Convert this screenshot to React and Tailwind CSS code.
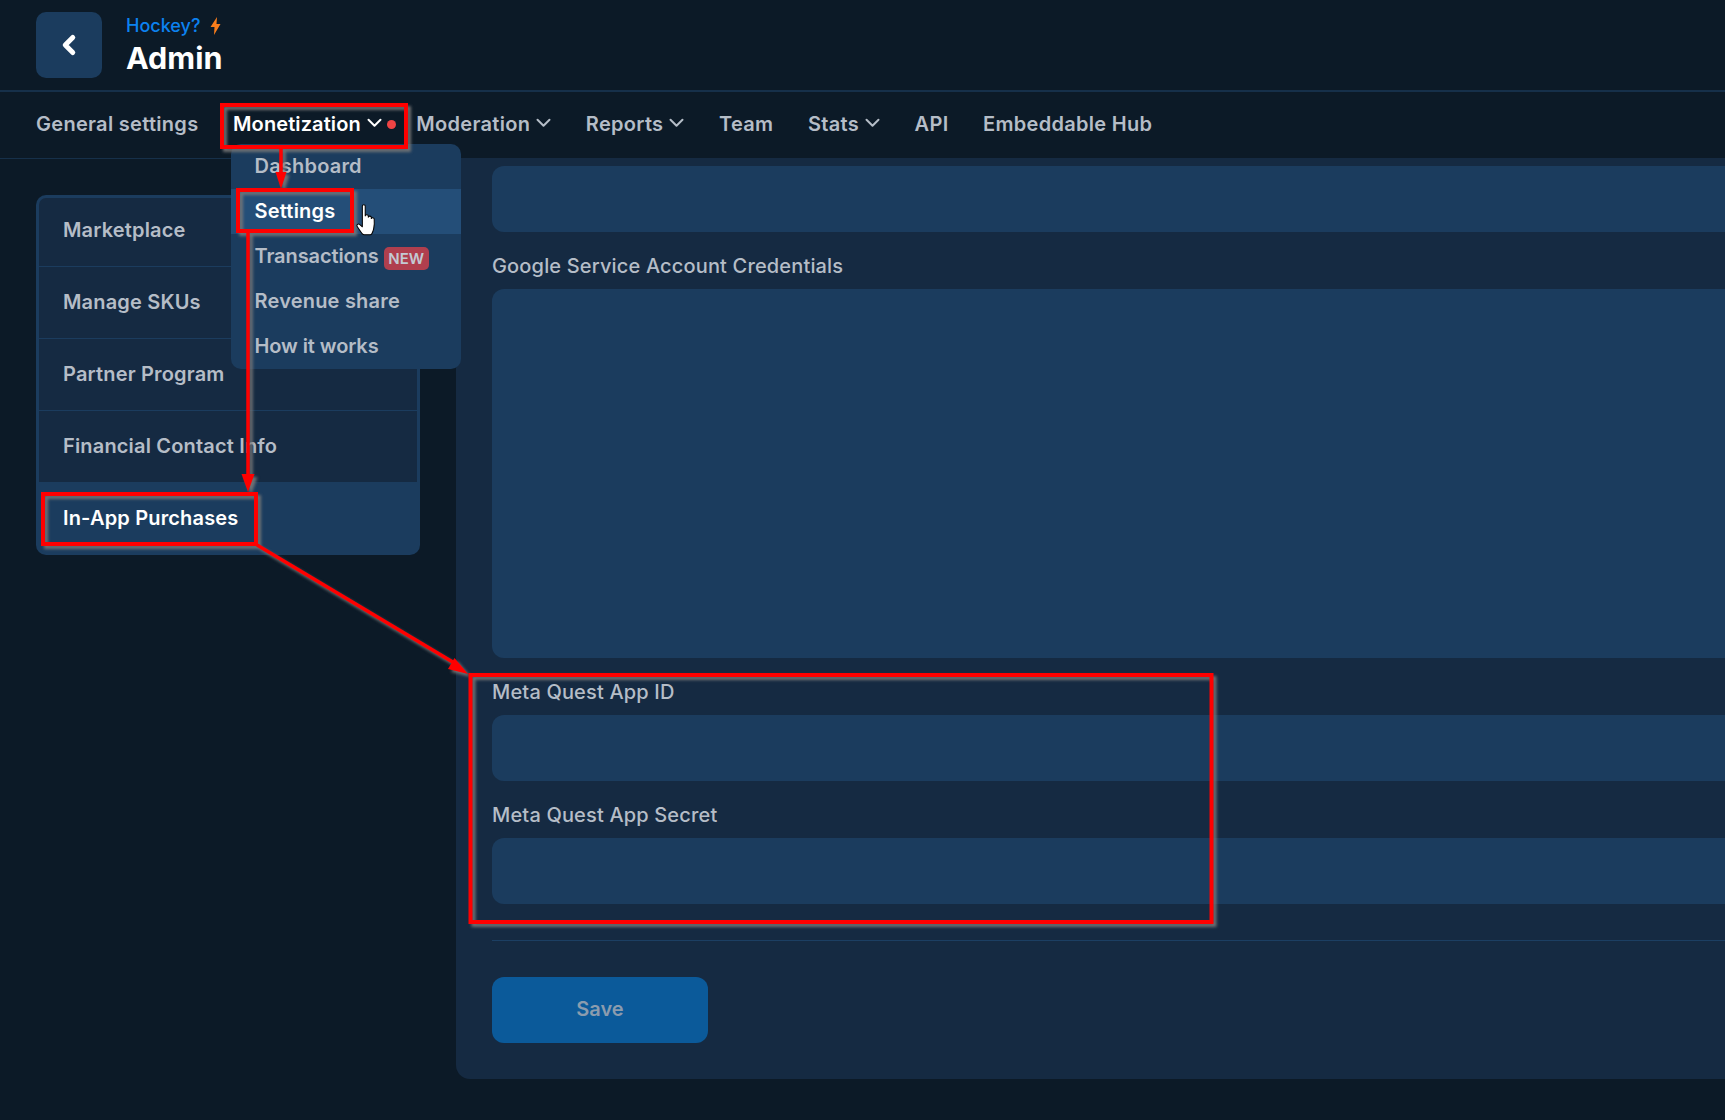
import React from "react";
import { ChevronLeft } from "lucide-react";

function NavItem({ label, chevron, active, dot }) {
  return (
    <div className={`relative flex items-center gap-[6px] text-[20px] font-semibold leading-6 ${active ? "tracking-[0.1px] text-white" : "tracking-[0.3px] text-[#b5bdc7]"}`}>
      <span>{label}</span>
      {chevron && (
        <svg className="mt-[-3px]" width="15" height="10" viewBox="0 0 15 10" fill="none" stroke="currentColor" strokeWidth="2" strokeLinecap="round" strokeLinejoin="round">
          <path d="M1.5 1.8 7.5 7.8 13.5 1.8" />
        </svg>
      )}
      {dot && <span className="absolute left-[calc(100%+5px)] top-[8px] h-[9px] w-[9px] rounded-full bg-[#ef4444]" />}
    </div>
  );
}

function SideRow({ label, first, active }) {
  return (
    <div
      className={`flex items-center pl-6 text-[20px] font-semibold leading-6 tracking-[0.17px] ${
        first ? "h-[69px] pb-[5px] border-b border-[#1b3c5e] bg-[#152a42] text-[#b5bdc7] rounded-t-[7px]"
        : active ? "h-[72px] pb-[2px] text-white"
        : "h-[72px] pb-[2px] border-b border-[#1b3c5e] bg-[#152a42] text-[#b5bdc7]"
      }`}
    >
      {label}
    </div>
  );
}

function Field({ label, tall }) {
  return (
    <>
      <div className="h-[57px] pt-[22px] text-[20px] font-medium leading-6 tracking-[0.16px] text-[#b5bdc7]">{label}</div>
      <div className={`${tall ? "h-[369px]" : "h-[66px]"} rounded-l-[12px] bg-[#1b3c5e]`} />
    </>
  );
}

function MenuItem({ label, active, badge, tight }) {
  return (
    <div className={`flex h-[45px] items-center pl-[23.5px] text-[20px] font-semibold leading-6 ${tight ? "tracking-[-0.1px]" : "tracking-[0.2px]"} ${active ? "bg-[#244e78] text-white" : "text-[#b5bdc7]"}`}>
      <span className="mt-[-2px]">{label}</span>
      {badge && (
        <span className="ml-[5px] mt-[3px] flex h-[23px] w-[45px] items-center justify-center rounded-[5px] bg-[#b03f4e] text-[15px] font-semibold leading-none tracking-normal text-[#c3cad3]">
          NEW
        </span>
      )}
    </div>
  );
}

function Annotations() {
  return (
    <svg className="pointer-events-none absolute left-0 top-0 drop-shadow-[3px_3px_1.5px_rgba(120,120,120,0.9)]" width="1725" height="1120" viewBox="0 0 1725 1120" fill="none">
      <g stroke="#ff0000" strokeWidth="4">
        <rect x="222" y="105" width="184" height="42" />
        <rect x="238" y="190" width="114" height="41" />
        <rect x="43" y="494" width="213" height="50" />
        <rect x="470.5" y="675" width="741" height="247" />
      </g>
      <g stroke="#ff0000" strokeWidth="3.5">
        <line x1="281" y1="147" x2="281" y2="175" />
        <line x1="248" y1="231" x2="248" y2="478" />
        <line x1="257" y1="545" x2="456" y2="664" />
      </g>
      <g fill="#ff0000">
        <polygon points="275.5,172 286.5,172 281,189" />
        <polygon points="241.5,474 254.5,474 248,492" />
        <polygon points="468,674 448,669 454.5,658" />
      </g>
    </svg>
  );
}

function HandCursor() {
  return (
    <svg className="absolute left-[355px] top-[204px]" width="25" height="33" viewBox="0 0 23 32" fill="#fff" stroke="#000" strokeWidth="1" strokeLinejoin="round">
      <path d="M6.5 2c0-1.6 2.8-1.6 2.8 0v9.5c.2-1.6 3-1.5 3 .3v1c.2-1.5 2.9-1.4 2.9.3v1c.3-1.3 2.8-1 2.8.7.3 3.5.2 6.5-.6 9.5-.5 2-1 3.2-1.7 4.6-.3.7-.9 1-1.6 1H8.5c-.9 0-1.6-.4-2.2-1.1-1.6-2.2-3.2-4.4-4.8-6.9-1-1.6.9-3.2 2.3-2.2l2.7 2.4z" />
    </svg>
  );
}

export default function App() {
  return (
    <div className="relative h-[1120px] w-[1725px] overflow-hidden bg-[#0c1a27] font-['Inter',sans-serif]">
      <header className="flex h-[92px] items-start gap-[24px] border-b-2 border-[#16304a] pl-9 pt-3">
        <div className="flex h-[66px] w-[66px] items-center justify-center rounded-[10px] bg-[#1b3c5e] text-white">
          <ChevronLeft size={30} strokeWidth={4} />
        </div>
        <div className="flex flex-col pt-[2px]">
          <div className="flex items-center gap-[10px] text-[18px] font-medium leading-6 text-[#0c82f0]">
            <span>Hockey?</span>
            <svg width="11" height="18" viewBox="0 0 11 18" fill="#f97d1c"><path d="M7 0 .5 10H4.5L4 18l6.5-11H6.5z" /></svg>
          </div>
          <div className="mt-[2px] text-[30.5px] font-bold leading-9 text-white">Admin</div>
        </div>
      </header>
      <nav className="flex h-[67px] items-center gap-[34.6px] border-b border-[#16304a] pb-[2px] pl-9">
        <NavItem label="General settings" />
        <NavItem label="Monetization" chevron active dot />
        <NavItem label="Moderation" chevron />
        <NavItem label="Reports" chevron />
        <NavItem label="Team" />
        <NavItem label="Stats" chevron />
        <NavItem label="API" />
        <NavItem label="Embeddable Hub" />
      </nav>
      <main className="mt-[-1px] flex">
        <aside className="w-[456px] shrink-0 pl-9 pt-[37px]">
          <div className="w-[384px] rounded-[10px] bg-[#1b3c5e] px-[3px] pt-[3px]">
            <SideRow label="Marketplace" first />
            <SideRow label="Manage SKUs" />
            <SideRow label="Partner Program" />
            <SideRow label="Financial Contact Info" />
            <SideRow label="In-App Purchases" active />
          </div>
        </aside>
        <section className="h-[921px] flex-1 rounded-bl-[14px] bg-[#152a42] pl-9 pt-2">
          <div className="h-[66px] rounded-l-[12px] bg-[#1b3c5e]" />
          <Field label="Google Service Account Credentials" tall />
          <Field label="Meta Quest App ID" />
          <Field label="Meta Quest App Secret" />
          <div className="mt-9 border-t border-[#1c3f63]" />
          <button className="mt-9 flex h-[66px] w-[216px] items-center justify-center rounded-[12px] bg-[#0b5a9a] pb-[2px] text-[20px] font-semibold text-[#8b9cae]">
            Save
          </button>
        </section>
      </main>
      <div className="absolute left-[231px] top-[144px] w-[230px] overflow-hidden rounded-[10px] bg-[#1b3c5e]">
        <MenuItem label="Dashboard" />
        <MenuItem label="Settings" active />
        <MenuItem label="Transactions" badge tight />
        <MenuItem label="Revenue share" />
        <MenuItem label="How it works" tight />
      </div>
      <Annotations />
      <HandCursor />
    </div>
  );
}
